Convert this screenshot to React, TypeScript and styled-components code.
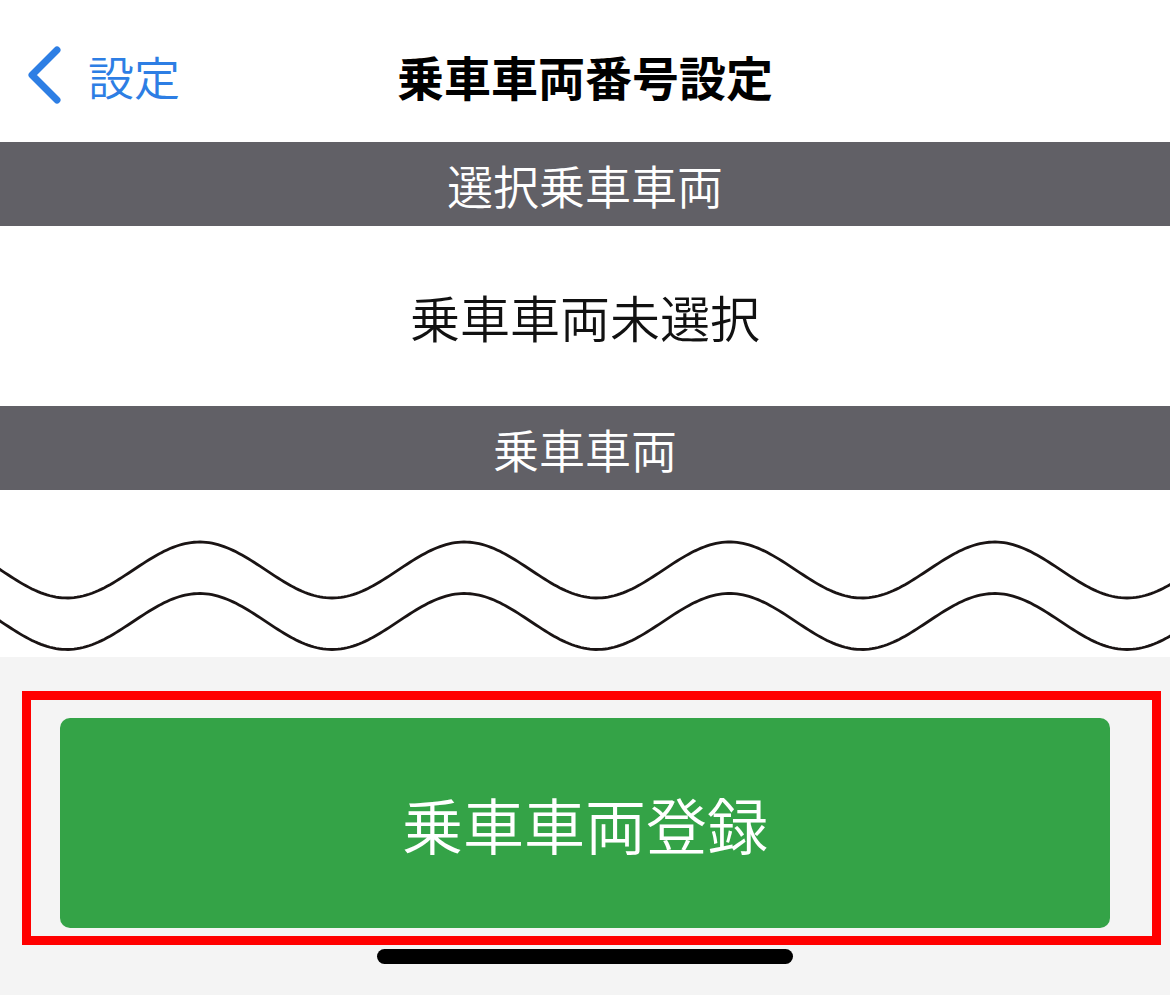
import styled, { createGlobalStyle } from "styled-components";
import { FC } from "react";

const GlobalStyle = createGlobalStyle`
  html, body {
    margin: 0;
    padding: 0;
    background: #ffffff;
  }
  body {
    font-family: "Noto Sans CJK JP", "Noto Sans", sans-serif;
  }
`;

const Screen = styled.div`
  display: flex;
  flex-direction: column;
  width: 1170px;
  min-height: 100vh;
  background-color: #ffffff;
`;

const NavBar = styled.header`
  display: grid;
  grid-template-columns: 1fr auto 1fr;
  align-items: center;
  height: 142px;
  box-sizing: border-box;
  padding-top: 8px;
`;

const BackButton = styled.button`
  display: flex;
  align-items: center;
  gap: 23px;
  justify-self: start;
  padding: 0 0 0 25px;
  border: none;
  background: none;
  color: #2d7ee4;
  font-family: inherit;
  font-size: 46px;
  font-weight: 350;
  line-height: 1;
  cursor: pointer;
`;

const Title = styled.h1`
  margin: 0;
  font-size: 47px;
  font-weight: 700;
  line-height: 1;
  color: #000000;
`;

const SectionHeader = styled.div`
  display: flex;
  align-items: center;
  justify-content: center;
  height: 84px;
  background-color: #616066;
  color: #ffffff;
  font-size: 46px;
  font-weight: 350;
  line-height: 1;
`;

const ValueRow = styled.div`
  display: flex;
  align-items: center;
  justify-content: center;
  height: 180px;
  font-size: 50px;
  font-weight: 350;
  line-height: 1;
  color: #111111;
`;

const WaveArea = styled.div`
  height: 167px;
  background-color: #ffffff;
  overflow: hidden;
`;

const Footer = styled.div`
  flex: 1;
  display: flex;
  flex-direction: column;
  align-items: flex-start;
  background-color: #f4f4f4;
`;

const Highlight = styled.div`
  margin: 34px 0 0 22px;
  width: 1139px;
  box-sizing: border-box;
  border: 9px solid #ff0000;
  padding: 18px 42px 8px 29px;
`;

const PrimaryButton = styled.button`
  display: flex;
  align-items: center;
  justify-content: center;
  width: 100%;
  height: 210px;
  border: none;
  border-radius: 10px;
  background-color: #34a347;
  color: #ffffff;
  font-family: inherit;
  font-size: 61px;
  font-weight: 350;
  line-height: 1;
  cursor: pointer;
`;

const HomeIndicator = styled.div`
  align-self: center;
  margin-top: 4px;
  width: 416px;
  height: 15px;
  border-radius: 8px;
  background-color: #000000;
`;

const Chevron: FC = () => (
  <svg width="40" height="62" viewBox="0 0 40 62">
    <path
      d="M32 6 L7 31 L32 56"
      fill="none"
      stroke="currentColor"
      strokeWidth="7"
      strokeLinecap="round"
      strokeLinejoin="round"
    />
  </svg>
);

// two parallel sine lines, used as a "content continues" break
const wavePath = (mid: number, amp: number, period: number, crest: number) => {
  const pts: string[] = [];
  for (let x = -4; x <= 1174; x += 3) {
    const y = mid + amp * Math.cos((2 * Math.PI * (x - crest)) / period);
    pts.push(`${x},${y.toFixed(2)}`);
  }
  return `M${pts.join(" L")}`;
};

const Waves: FC = () => (
  <svg width="1170" height="167" viewBox="0 0 1170 167">
    <path d={wavePath(80, 28, 265, 67)} fill="none" stroke="#1a1414" strokeWidth="2.8" />
    <path d={wavePath(131.5, 28, 265, 67)} fill="none" stroke="#1a1414" strokeWidth="2.8" />
  </svg>
);

const App: FC = () => {
  return (
    <Screen>
      <GlobalStyle />
      <NavBar>
        <BackButton>
          <Chevron />
          設定
        </BackButton>
        <Title>乗車車両番号設定</Title>
        <div />
      </NavBar>
      <SectionHeader>選択乗車車両</SectionHeader>
      <ValueRow>乗車車両未選択</ValueRow>
      <SectionHeader>乗車車両</SectionHeader>
      <WaveArea>
        <Waves />
      </WaveArea>
      <Footer>
        <Highlight>
          <PrimaryButton>乗車車両登録</PrimaryButton>
        </Highlight>
        <HomeIndicator />
      </Footer>
    </Screen>
  );
};

export default App;
